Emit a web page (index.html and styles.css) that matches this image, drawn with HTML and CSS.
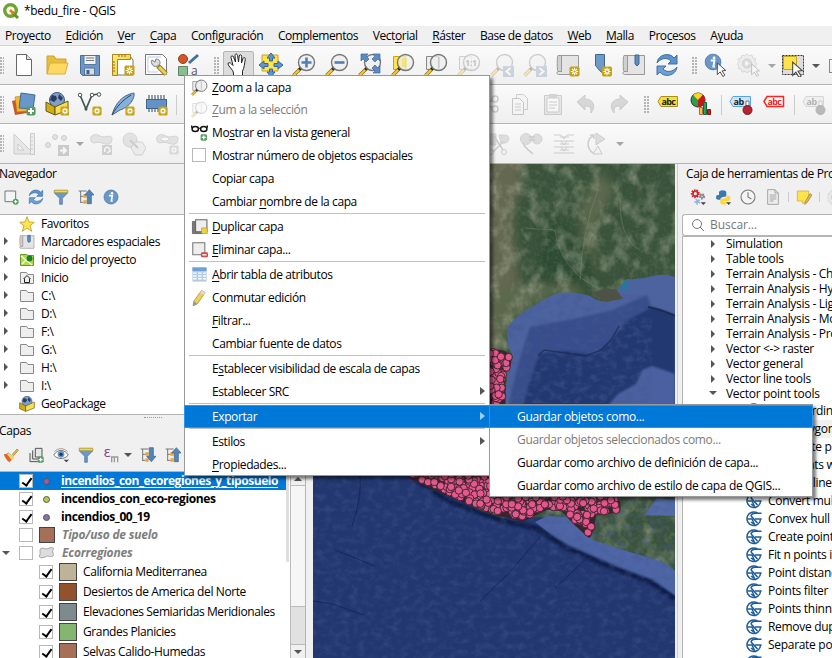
FILE: index.html
```html
<!DOCTYPE html>
<html lang="es">
<head>
<meta charset="utf-8">
<title>*bedu_fire - QGIS</title>
<link rel="stylesheet" href="styles.css">
</head>
<body>
<svg class="defs" width="0" height="0">
<defs>
<linearGradient id="gy" x1="0" y1="0" x2="1" y2="1"><stop offset="0" stop-color="#ffef80"/><stop offset="1" stop-color="#e8c52a"/></linearGradient>
<symbol id="star" viewBox="0 0 12 12"><rect x=".5" y=".5" width="11" height="11" rx="2" fill="#c8a216"/><path d="M6 2v8M2 6h8M3.3 3.3l5.4 5.4M8.7 3.3L3.3 8.7" stroke="#fff" stroke-width="1.3"/><circle cx="6" cy="6" r="1.2" fill="#c8a216"/></symbol>
<symbol id="mag" viewBox="0 0 24 24"><path d="M9 15L1.500 22.500" stroke="#8c6d20" stroke-width="3.600"/><path d="M7 17l-5.500 5.500" stroke="#f5c83a" stroke-width="2.200"/><path d="M9.500 14.500l-2 2" stroke="#222" stroke-width="3"/><circle cx="14.500" cy="9.500" r="8" fill="#eee" fill-opacity=".75" stroke="#777" stroke-width="1.400"/></symbol>
<symbol id="new" viewBox="0 0 24 24"><path d="M4.500 1.500h10l5 5v16h-15z" fill="#fff" stroke="#666"/><path d="M14.500 1.500v5h5" fill="#ddd" stroke="#666"/></symbol>
<symbol id="open" viewBox="0 0 24 24"><path d="M2 21V3h7l2 3h10v4" fill="#e9bd3c" stroke="#cfa234"/><path d="M5 10h18l-3 11H2z" fill="#ffd964" stroke="#d9ac3c"/></symbol>
<symbol id="save" viewBox="0 0 24 24"><path d="M2.500 2.500h19v20h-17l-2-2z" fill="#6d97c8" stroke="#4a6e99"/><path d="M6 2.500h12v9H6z" fill="#f0f2f4" stroke="#55779b"/><path d="M8 5h8M8 7.500h8" stroke="#777"/><path d="M6.500 15h10v7h-10z" fill="#d9dde2" stroke="#55779b"/><path d="M8.500 17h3v4h-3z" fill="#3e628d"/></symbol>
<symbol id="layout" viewBox="0 0 24 24"><path d="M3 3h16l3 4v15H3z" fill="#fff" stroke="#777"/><path d="M1.500 1.500h18v5h-13v16h-5z" fill="url(#gy)" stroke="#a9851c"/><path d="M8 2v2M11 2v2M14 2v2M2 9h2M2 12h2M2 15h2M2 18h2" stroke="#8a6a10"/><use href="#star" x="13" y="12" width="11" height="11"/></symbol>
<symbol id="wrench" viewBox="0 0 24 24"><path d="M1.500 1.500h17l4 4v16h-21z" fill="#fff" stroke="#777"/><path d="M4 4h13M4 4v15h10" stroke="#b7cbea" fill="none"/><path d="M14 13l8 8" stroke="#967823" stroke-width="5"/><path d="M15 14l7 7" stroke="#f0cf55" stroke-width="3"/><path d="M8 7l3 2 1-3c4 0 5 4 3 6s-6 2-7-1c-1-2-1-3 0-4z" fill="#ddd" stroke="#777"/></symbol>
<symbol id="style" viewBox="0 0 24 24"><circle cx="6" cy="6" r="4.500" fill="#d4552a" stroke="#9a3c1c"/><path d="M12 10l9-8" stroke="#47719f" stroke-width="3"/><path d="M1.500 13.500h9v9h-9z" fill="#8bbc94" stroke="#58865f"/><text x="14" y="22" font-size="12" fill="#555">a</text></symbol>
<symbol id="hand" viewBox="0 0 24 24"><path d="M7.500 23v-3c0-3-5.500-7-5.500-9 0-1.800 2-1.800 3.500 0l1.500 1.500L5 4.500c-.3-2 2-2.200 2.600-.4L9.500 9 9 2.500c0-2 2.300-2 2.600 0L12.500 9l.7-6c.3-1.800 2.500-1.500 2.500.3l-.2 6.700 1.500-4.500c.6-1.600 2.600-1 2.300.7-1 5-.8 8-2.800 12v4.800z" fill="#fff" stroke="#222" stroke-width="1"/></symbol>
<symbol id="pansel" viewBox="0 0 24 24"><path d="M3 2h16v16H3z" fill="#ffe34c" stroke="#c5a424"/><path d="M12 0l4 5h-2.500v3h-3V5H8zM12 24l-4-5h2.500v-3h3v3H16zM0 12l5-4v2.500h4v3H5V16zM24 12l-5 4v-2.500h-4v-3h4V8z" fill="#6194cb" stroke="#34679f"/></symbol>
<symbol id="zin" viewBox="0 0 24 24"><use href="#mag"/><path d="M14.500 4.500v10M9.500 9.500h10" stroke="#4e7fb8" stroke-width="2.600"/></symbol>
<symbol id="zout" viewBox="0 0 24 24"><use href="#mag"/><path d="M9.500 9.500h10" stroke="#4e7fb8" stroke-width="2.600"/></symbol>
<symbol id="zfull" viewBox="0 0 24 24"><use href="#mag"/><path d="M3 1h7L8 3l3 3-3 3-3-3-2 2zM22 1v7l-2-2-3 3-3-3 3-3-2-2zM22 20h-7l2-2-3-3 3-3 3 3 2-2z" fill="#5c8dc2" stroke="#3e6898" stroke-width=".7"/></symbol>
<symbol id="zsel" viewBox="0 0 24 24"><path d="M2.500 3.500h12v13h-12z" fill="#ffe34c" stroke="#c5a424"/><use href="#mag"/><path d="M11 5h5v9h-5z" fill="#eedf6c" opacity=".7"/></symbol>
<symbol id="zlay" viewBox="0 0 24 24"><path d="M2.500 3.500h12v13h-12z" fill="#eee" stroke="#888"/><use href="#mag"/><path d="M15 4v11" stroke="#bbb"/></symbol>
<symbol id="z11" viewBox="0 0 24 24"><path d="M2.500 3.500h12v13h-12z" fill="#eee" stroke="#777"/><use href="#mag"/><text x="8" y="13" font-size="9" font-weight="700" fill="#555">1:1</text></symbol>
<symbol id="zlast" viewBox="0 0 24 24"><use href="#mag"/><path d="M13 13h11v11H13z" fill="#7790ad"/><path d="M20.500 15l-4 3.500 4 3.500" fill="none" stroke="#fff" stroke-width="2"/></symbol>
<symbol id="znext" viewBox="0 0 24 24"><use href="#mag"/><path d="M13 13h11v11H13z" fill="#7790ad"/><path d="M16.500 15l4 3.500-4 3.500" fill="none" stroke="#fff" stroke-width="2"/></symbol>
<symbol id="book" viewBox="0 0 24 24"><path d="M5.500 2.500h17v19h-20c-2 0-2-3 0-3h3z" fill="#e4e4e4" stroke="#999"/><path d="M2 2.500h3.500v16H2c-1 0-1-16 0-16z" fill="#d0d0d0" stroke="#999"/></symbol>
<symbol id="newmap" viewBox="0 0 24 24"><use href="#book"/><use href="#star" x="13" y="13" width="11" height="11"/></symbol>
<symbol id="newbm" viewBox="0 0 24 24"><path d="M6.500 1.500h9v20l-5-4-4-5z" fill="#6d9acb" stroke="#40688f"/><use href="#star" x="12.500" y="13" width="11" height="11"/></symbol>
<symbol id="bm" viewBox="0 0 24 24"><use href="#book"/><path d="M13 2v9l2 2 2-2V2z" fill="#5c8dc2" stroke="#40688f"/></symbol>
<symbol id="refresh" viewBox="0 0 24 24"><path d="M2 10C3 1 15-1 19 5l3-3v9h-9l3-3C12 4 6 5 2 10z" fill="#5b92cf" stroke="#42719f"/><path d="M22 14c-1 9-13 11-17 5l-3 3v-9h9l-3 3c4 4 10 3 14-2z" fill="#6ba0d8" stroke="#42719f"/></symbol>
<symbol id="cursor" viewBox="0 0 12 16"><path d="M1 1l9 8-4 .5 3 4.500-2 1.500-3-5-3 3z" fill="#fff" stroke="#444"/></symbol>
<symbol id="info" viewBox="0 0 24 24"><circle cx="12" cy="12" r="10.500" fill="#6a96c8" stroke="#41709f"/><circle cx="13.500" cy="6.500" r="1.900" fill="#fff"/><path d="M9 10h5l-1.500 8h2" stroke="#fff" stroke-width="2.500" fill="none"/></symbol>
<symbol id="ident" viewBox="0 0 24 24"><use href="#info" width="18" height="18"/><use href="#cursor" x="12" y="9" width="12" height="15"/></symbol>
<symbol id="gear" viewBox="0 0 24 24"><path d="M12 1l2.500 2.500 3.500-1 1 3.500 3.500 1-1 3.500L24 13l-2.500 2.500 1 3-3.500 1-1 3.500-3.500-1L12 24l-2.500-2-3.500 1-1-3.500-3.500-1 1-3L0 13l2.500-2.500-1-3.500L5 6l1-3.500 3.500 1z" fill="#ddd" stroke="#888"/><circle cx="12" cy="12.500" r="5.500" fill="#aaa" stroke="#777"/><path d="M10 9.500l5 3-5 3z" fill="#fff"/></symbol>
<symbol id="action" viewBox="0 0 24 24"><use href="#gear" width="20" height="20"/><use href="#cursor" x="13" y="10" width="12" height="14"/></symbol>
<symbol id="select" viewBox="0 0 24 24"><path d="M1.500 2.500h21v19h-21z" fill="#ddd" stroke="#333" stroke-dasharray="2 1"/><path d="M2.500 3.500h13v13h-13z" fill="#ffe34c" stroke="#c5a424"/><use href="#cursor" x="10" y="8" width="14" height="17"/></symbol>
<symbol id="plus" viewBox="0 0 12 12"><rect x=".5" y=".5" width="11" height="11" rx="2.500" fill="#5a9a66"/><path d="M6 2.500v7M2.500 6h7" stroke="#fff" stroke-width="2.200"/></symbol>
<symbol id="layers" viewBox="0 0 24 24"><path d="M0 9l13-3 2 15-12 2z" fill="#c9552d"/><path d="M3 5l13-2v16L5 20z" fill="#f4b82d" stroke="#b37f16" stroke-width=".6"/><path d="M9 1l14 2-2 14-14-1z" fill="#6a97c9" stroke="#416994"/><use href="#plus" x="14" y="14" width="10" height="10"/></symbol>
<symbol id="gpkg" viewBox="0 0 24 24"><circle cx="12" cy="8" r="7.500" fill="#7f9fc8" stroke="#3c5a82"/><path d="M7 3l4 1 1 3-3 3-4-2zM14 2l4 4-2 3-3-3z" fill="#273d60"/><path d="M1 10l9 5v8l-9-4z" fill="#d0ac18" stroke="#6b5608"/><path d="M10 15l13-6v9l-13 5z" fill="#f6e05a" stroke="#6b5608"/></symbol>
<symbol id="newgpkg" viewBox="0 0 24 24"><use href="#gpkg"/><use href="#star" x="15" y="14" width="10" height="10"/></symbol>
<symbol id="shp" viewBox="0 0 24 24"><path d="M2 3l6 14 6-14 7-1" fill="none" stroke="#455" stroke-width="1.700"/><circle cx="2" cy="3" r="1.800" fill="#fff" stroke="#455"/><circle cx="14" cy="3" r="1.800" fill="#fff" stroke="#455"/><circle cx="21" cy="2.500" r="1.800" fill="#fff" stroke="#455"/><circle cx="8" cy="17" r="1.500" fill="#455"/><use href="#star" x="14" y="14" width="10" height="10"/></symbol>
<symbol id="feather" viewBox="0 0 24 24"><path d="M1 23C4 12 11 3 23 1c1 5-4 14-14 17z" fill="#86b0da" stroke="#46698f"/><path d="M1 23C6 14 12 8 20 3" stroke="#345" fill="none"/><use href="#star" x="14" y="14" width="10" height="10"/></symbol>
<symbol id="chip" viewBox="0 0 24 24"><path d="M5 3v17M8 3v17M11 3v17M14 3v17M17 3v17M20 3v17" stroke="#345"/><rect x="2.500" y="7.500" width="20" height="9" fill="#6392c6" stroke="#3f668f"/><use href="#star" x="14" y="14" width="10" height="10"/></symbol>
<symbol id="cut" viewBox="0 0 24 24"><circle cx="20" cy="7" r="3" fill="none" stroke="#777" stroke-width="1.500"/><circle cx="20" cy="17" r="3" fill="none" stroke="#777" stroke-width="1.500"/><path d="M17 8L5 18M17 16L5 6" stroke="#777" stroke-width="2"/></symbol>
<symbol id="copy" viewBox="0 0 24 24"><path d="M8.500 2.500h7l4 4v11h-11z" fill="#eee" stroke="#777"/><path d="M4.500 6.500h7l4 4v12h-11z" fill="#f6f6f6" stroke="#666"/><path d="M7 12h6M7 15h6M7 18h6" stroke="#777"/></symbol>
<symbol id="paste" viewBox="0 0 24 24"><path d="M3.500 3.500h17v19h-17z" fill="#ccc" stroke="#777"/><path d="M6 6h12v14H6z" fill="#fff" stroke="#777"/><path d="M8 2h8v4H8z" fill="#888"/><path d="M8 10h8M8 13h8M8 16h6" stroke="#777"/></symbol>
<symbol id="undo" viewBox="0 0 24 24"><path d="M3 10l8-7v4c9 0 11 8 6 14 0-6-1-7-6-7v4z" fill="#999" stroke="#777"/></symbol>
<symbol id="redo" viewBox="0 0 24 24"><path d="M21 10l-8-7v4C4 7 2 15 7 21c0-6 1-7 6-7v4z" fill="#999" stroke="#777"/></symbol>
<symbol id="lab" viewBox="0 0 24 24"><path d="M2 9.500l3-5h16.500v10H5z" fill="#f7df38" stroke="#a7901c"/><text x="5.500" y="13" font-size="9" font-weight="700" fill="#222" textLength="14">abc</text></symbol>
<symbol id="labr" viewBox="0 0 24 24"><path d="M2 9.500l3-5h16.500v10H5z" fill="#fff" stroke="#f22" stroke-width="1.500"/><text x="5.500" y="13" font-size="9" font-weight="700" fill="#e22" textLength="14">abc</text></symbol>
<symbol id="labp" viewBox="0 0 24 24"><path d="M1 9.500l3-5h17.500v10H4z" fill="#cfe4fb" stroke="#58a0e8"/><text x="4.500" y="13" font-size="9" font-weight="700" fill="#222">ab</text><path d="M17 15V9h3v6" fill="#fff" stroke="#777"/><circle cx="18.500" cy="18" r="4.500" fill="#b52230" stroke="#7c1620"/></symbol>
<symbol id="diag" viewBox="0 0 24 24"><circle cx="9" cy="8" r="7" fill="#29a04a" stroke="#333"/><path d="M9 8L4 3a7 7 0 0110 0z" fill="#ffd21c"/><path d="M9 8l5-5a7 7 0 01-5 12z" fill="#c11a1a"/><path d="M10.500 15.500h3v7h-3z" fill="#ffc91c" stroke="#a66"/><path d="M14.500 10.500h3v12h-3z" fill="#2ba34c" stroke="#164"/><path d="M18.500 17.500h3v5h-3z" fill="#d22020" stroke="#811"/></symbol>
<symbol id="rule" viewBox="0 0 24 24"><path d="M2 2v20h20zM6 12v6h6z" fill="#ccc" stroke="#777" fill-rule="evenodd"/><path d="M18.500 1.500h4v21h-4z" fill="#ddd" stroke="#777"/><path d="M19 5h2M19 9h2M19 13h2M19 17h2" stroke="#777"/></symbol>
<symbol id="nodes" viewBox="0 0 24 24"><g fill="#bbb" stroke="#777"><circle cx="3" cy="13" r="2.500"/><circle cx="10" cy="5" r="2.500"/><circle cx="19" cy="6" r="2.500"/></g><path d="M13 13h11v11H13z" fill="#777"/><path d="M15 18.500h6m-3-3l3 3-3 3" stroke="#fff" stroke-width="2" fill="none"/></symbol>
<symbol id="blob" viewBox="0 0 24 24"><path d="M2 9C0 3 6 1 11 4s12-3 12 3-5 6-10 4-9 2-11-2z" fill="#bbb" stroke="#888"/></symbol>
<symbol id="rotf" viewBox="0 0 24 24"><use href="#blob"/><path d="M13 13h10v10H13z" fill="#888"/><path d="M16 20c-2-6 5-6 5-1l-3 2" stroke="#fff" stroke-width="1.500" fill="none"/></symbol>
<symbol id="simp" viewBox="0 0 24 24"><circle cx="8" cy="8" r="7" fill="#bbb" stroke="#888"/><path d="M9 16l4-6h7l4 6-4 7h-7z" fill="#ddd" stroke="#888"/><path d="M8 8l8 8" stroke="#777" stroke-width="2"/></symbol>
<symbol id="ring" viewBox="0 0 24 24"><use href="#blob"/><ellipse cx="10" cy="7" rx="4" ry="2" fill="#fff" stroke="#999"/><use href="#star" x="14" y="13" width="10" height="10"/></symbol>
<symbol id="split" viewBox="0 0 24 24"><path d="M1 2h9v11H5zM13 3h6c6 0 4 8 0 8h-4z" fill="#aaa" stroke="#888"/><path d="M8 4l9 14M17 10L7 20" stroke="#777" stroke-width="1.500"/><circle cx="5" cy="20" r="2.500" fill="none" stroke="#777"/><circle cx="18" cy="20" r="2.500" fill="none" stroke="#777"/></symbol>
<symbol id="merge" viewBox="0 0 24 24"><circle cx="7" cy="7" r="5.500" fill="#aaa" stroke="#888"/><circle cx="18" cy="7" r="5" fill="#aaa" stroke="#888"/><path d="M4 11c2 6 4 5 10 11M10 5h6M10 8h6" stroke="#777" fill="none" stroke-width="1.500"/></symbol>
<symbol id="mattr" viewBox="0 0 24 24"><path d="M2 3h7M15 3h7M2 9h20M2 15h20M2 21h20M8 5h9M8 12h9M8 18h9M9 3l3 4M15 3l-3 4M9 9l3 4M15 9l-3 4M9 15l3 4M15 15l-3 4" stroke="#777"/></symbol>
<symbol id="rots" viewBox="0 0 24 24"><path d="M8 21C1 16 2 7 8 4M5 3h4v4" fill="none" stroke="#777" stroke-width="1.500"/><path d="M11 1l9 6-9 6z" fill="#aaa" stroke="#777"/><path d="M8 22l5-8 4 8z" fill="#eee" stroke="#777"/></symbol>
<symbol id="addl" viewBox="0 0 24 24"><path d="M3 3h16v16H3z" fill="#f4f4f4" stroke="#777" stroke-width="1.500"/><circle cx="19" cy="19" r="4.500" fill="#5a9a66"/><path d="M19 16.500v5M16.500 19h5" stroke="#fff" stroke-width="1.500"/></symbol>
<symbol id="filter" viewBox="0 0 24 24"><path d="M2 2h20v4l-8 8v9h-4v-9L2 6z" fill="#6a98cb" stroke="#456b96"/><path d="M2 2h20v3H2z" fill="#ffe34c" stroke="#c5a424"/></symbol>
<symbol id="tree" viewBox="0 0 24 24"><path d="M1 3h12M4 3v18M4 11h4M4 20h4" stroke="#777" stroke-width="1.500"/><path d="M8 8h5v5H8zM8 17h5v5H8z" fill="#f3a32f"/></symbol>
<symbol id="collapse" viewBox="0 0 24 24"><use href="#tree"/><path d="M17 1l7 8h-4v13h-6V9h-4z" fill="#5385b9" stroke="#365e88"/></symbol>
<symbol id="expand" viewBox="0 0 24 24"><use href="#tree"/><path d="M17 22l7-8h-4V1h-6v13h-4z" fill="#5385b9" stroke="#365e88"/></symbol>
<symbol id="fav" viewBox="0 0 24 24"><path d="M12 1l3 8 8 .5-6.500 5L19 23l-7-5-7 5 2.500-8.500L1 9.500 9 9z" fill="#ffe64f" stroke="#caa52b" stroke-width="1.400"/></symbol>
<symbol id="folder" viewBox="0 0 16 16"><path d="M1.500 2.500h6l1.500 2h5.500v9h-13z" fill="#eee" stroke="#8a8a8a"/></symbol>
<symbol id="home" viewBox="0 0 16 16"><use href="#folder"/><path d="M4.500 9L8 5.500 11.500 9M5.500 8.500v4h5v-4" fill="none" stroke="#222"/></symbol>
<symbol id="projhome" viewBox="0 0 16 16"><path d="M1.500 2.500h6l1.500 1h5.500v10h-13z" fill="#b6d84b" stroke="#68912f"/><path d="M2 4l11 9M3 12l6-6" stroke="#efffd0" stroke-width="1.500"/><circle cx="10.500" cy="6.500" r="3" fill="#168221"/></symbol>
<symbol id="brush" viewBox="0 0 24 24"><path d="M14 11l7-8 2 2-7 8z" fill="#e9b951" stroke="#a67a25"/><path d="M8 8l8 7-2 3-9-7z" fill="#72a3d3"/><path d="M1 11l5-1 8 8-4 5c-4-2-7-7-9-12z" fill="#de6537"/><path d="M6 11l7 8 4-2-8-8z" fill="#ffd65a"/></symbol>
<symbol id="group" viewBox="0 0 24 24"><path d="M3 9v13h14M7 5v13h13M11 2h10v13H11z" fill="#ddd" fill-opacity=".6" stroke="#555" stroke-width="1.500"/><use href="#plus" x="14" y="14" width="10" height="10"/></symbol>
<symbol id="eye" viewBox="0 0 24 24"><path d="M1 12c6-9 16-9 22 0-6 7-16 7-22 0z" fill="#fff" stroke="#777" stroke-width="1.500"/><circle cx="12" cy="11" r="5" fill="#6395ca"/><circle cx="12" cy="11" r="2.500" fill="#203954"/><path d="M2 7c6-6 14-6 20 0" fill="none" stroke="#777"/><path d="M16 19h8l-4 4z" fill="#444"/></symbol>
<symbol id="eps" viewBox="0 0 24 24"><text x="1" y="15" font-size="22" fill="#774782">ε</text><path d="M13 23v-8h9v8M17 15v8" fill="none" stroke="#999" stroke-width="2"/></symbol>
<symbol id="cogs" viewBox="0 0 24 24"><g fill="none" stroke-dasharray="2.200 1.300"><circle cx="8" cy="7" r="5" stroke="#d22630" stroke-width="3.500"/><circle cx="18" cy="11" r="3.200" stroke="#888" stroke-width="3"/><circle cx="11" cy="19" r="3" stroke="#91b5e0" stroke-width="3"/></g><circle cx="8" cy="7" r="3.600" fill="none" stroke="#d22630" stroke-width="2.500"/><circle cx="18" cy="11" r="2.200" fill="none" stroke="#888" stroke-width="2"/><circle cx="11" cy="19" r="2.400" fill="#91b5e0"/><path d="M16 20h8l-4 4z" fill="#444"/></symbol>
<symbol id="py" viewBox="0 0 24 24"><path d="M6 9V5c0-4 11-4 11 0v5c0 3-9 0-9 6H5C0 16 1 9 4 9h8" fill="#3d79aa"/><path d="M18 10h2c4 0 4 8 0 8h-8v1h6v2c0 3-10 3-10 0v-5c0-3 10 0 10-6z" fill="#ffd43f"/><path d="M17 20h7l-3.500 4z" fill="#444"/></symbol>
<symbol id="clock" viewBox="0 0 24 24"><circle cx="12" cy="12" r="10.500" fill="#f4f4f4" stroke="#777" stroke-width="1.600"/><path d="M12 5v7l5 3" fill="none" stroke="#777" stroke-width="1.600"/></symbol>
<symbol id="doc" viewBox="0 0 24 24"><path d="M4 1h11l5 5v17H4zM15 1v5h5" fill="#eee" stroke="#999" stroke-width="1.300"/><path d="M7 9h10M7 12h10M7 15h10M7 18h6" stroke="#999" stroke-width="1.300"/></symbol>
<symbol id="edit" viewBox="0 0 24 24"><path d="M2 3h17v14l-4 1-5 4v-4H2z" fill="#ffe34c" stroke="#c5a424"/><path d="M21 7l3 2-8 12-3 2 1-4z" fill="#e8bc4a" stroke="#8b7544"/></symbol>
<symbol id="glasses" viewBox="0 0 24 24"><ellipse cx="6" cy="7" rx="4.500" ry="3.500" fill="none" stroke="#111" stroke-width="2"/><ellipse cx="18" cy="7" rx="4.500" ry="3.500" fill="none" stroke="#111" stroke-width="2"/><path d="M10 6h4M2 6L0 3h2M22 6l2-3h-2" fill="none" stroke="#111" stroke-width="1.500"/><use href="#plus" x="13" y="14" width="10" height="10"/></symbol>
<symbol id="dup" viewBox="0 0 24 24"><path d="M2 5h15v17H2z" fill="#777" stroke="#555"/><path d="M6.500 2.500h16v17h-16z" fill="#eee" stroke="#666" stroke-width="1.500"/><path d="M15 14h8v8h-8z" fill="#edd348" stroke="#b59a22"/></symbol>
<symbol id="del" viewBox="0 0 24 24"><path d="M2.500 2.500h17v17h-17z" fill="#eee" stroke="#777" stroke-width="1.500"/><rect x="14" y="16" width="10" height="7" rx="2" fill="#dc4545"/><path d="M16 19.500h6" stroke="#fff" stroke-width="2"/></symbol>
<symbol id="table" viewBox="0 0 24 24"><path d="M2 2h20v20H2z" fill="#b3cae3"/><path d="M2 2h20v5H2z" fill="#6fa0d4"/><path d="M3 10h5M10 10h5M17 10h4M3 14h5M10 14h5M17 14h4M3 18h5M10 18h5M17 18h4" stroke="#fff" stroke-width="2"/></symbol>
<symbol id="pencil" viewBox="0 0 24 24"><path d="M15 2l5 3L9 21l-6 3 1-7z" fill="#ead35a" stroke="#99853a"/><path d="M4 17l5 4-6 3z" fill="#999"/><path d="M15 2l5 3-2 3-5-3z" fill="#ddd"/></symbol>
<symbol id="saga" viewBox="0 0 16 16"><path d="M11.500 2A6.800 6.800 0 1 0 14.600 8" fill="none" stroke="#1d5c98" stroke-width="1.500"/><path d="M15.500 2.300H9.500C6 2.300 4.500 4 5.500 5.500l6 6.500" fill="none" stroke="#1d5c98" stroke-width="1.600"/><path d="M15.500 8H9M1.500 8H6l2.500 5.500L5 11" fill="none" stroke="#1d5c98" stroke-width="1.500"/></symbol>
</defs>
</svg>

<header class="title"><svg viewBox="0 0 16 16"><circle cx="7.500" cy="7.500" r="5.800" fill="none" stroke="#6ba52f" stroke-width="3.400"/><path d="M9 9l6 6" stroke="#5b9428" stroke-width="3"/><path d="M7 7l4 4" stroke="#ee7913" stroke-width="2.500"/></svg><span>*bedu_fire - QGIS</span></header>
<nav class="menubar"><span>Pro<u>y</u>ecto</span><span><u>E</u>dición</span><span><u>V</u>er</span><span><u>C</u>apa</span><span>Con<u>f</u>iguración</span><span>Co<u>m</u>plementos</span><span>Vect<u>o</u>rial</span><span><u>R</u>áster</span><span>Base de <u>d</u>atos</span><span><u>W</u>eb</span><span><u>M</u>alla</span><span>Pro<u>c</u>esos</span><span>A<u>y</u>uda</span></nav>
<div class="bar"><i class="grip first"></i><b><svg><use href="#new"/></svg></b><b><svg><use href="#open"/></svg></b><b><svg><use href="#save"/></svg></b><b><svg><use href="#layout"/></svg></b><b><svg><use href="#wrench"/></svg></b><b><svg><use href="#style"/></svg></b><i class="grip"></i><b class="pressed"><svg><use href="#hand"/></svg></b><b><svg><use href="#pansel"/></svg></b><b><svg><use href="#zin"/></svg></b><b><svg><use href="#zout"/></svg></b><b><svg><use href="#zfull"/></svg></b><b><svg><use href="#zsel"/></svg></b><b><svg><use href="#zlay"/></svg></b><b class="off"><svg><use href="#z11"/></svg></b><b class="off"><svg><use href="#zlast"/></svg></b><b class="off"><svg><use href="#znext"/></svg></b><b><svg><use href="#newmap"/></svg></b><b><svg><use href="#newbm"/></svg></b><b><svg><use href="#bm"/></svg></b><b><svg><use href="#refresh"/></svg></b><i class="grip"></i><b><svg><use href="#ident"/></svg></b><b class="off"><svg><use href="#action"/></svg></b><i class="drop off"></i><b><svg><use href="#select"/></svg></b><i class="drop"></i><b class="edge"></b></div>
<div class="bar"><i class="grip first"></i><b><svg><use href="#layers"/></svg></b><b><svg><use href="#newgpkg"/></svg></b><b><svg><use href="#shp"/></svg></b><b><svg><use href="#feather"/></svg></b><b><svg><use href="#chip"/></svg></b><i class="sep"></i><i class="gap2"></i><b class="off"><svg><use href="#cut"/></svg></b><b class="off"><svg><use href="#copy"/></svg></b><b class="off"><svg><use href="#paste"/></svg></b><b class="off"><svg><use href="#undo"/></svg></b><b class="off"><svg><use href="#redo"/></svg></b><i class="grip"></i><b class="n"><svg><use href="#lab"/></svg></b><b><svg><use href="#diag"/></svg></b><i class="sep"></i><b class="n"><svg><use href="#labp"/></svg></b><b><svg><use href="#labr"/></svg></b><i class="sep"></i><b class="off gray"><svg><use href="#labp"/></svg></b></div>
<div class="bar last"><i class="grip first"></i><b class="off"><svg><use href="#rule"/></svg></b><b class="off"><svg><use href="#nodes"/></svg></b><i class="drop off"></i><b class="off gray"><svg><use href="#rotf"/></svg></b><b class="off"><svg><use href="#simp"/></svg></b><b class="off gray"><svg><use href="#ring"/></svg></b><i class="gap3"></i><b class="off"><svg><use href="#split"/></svg></b><b class="off"><svg><use href="#merge"/></svg></b><b class="off"><svg><use href="#mattr"/></svg></b><b class="off"><svg><use href="#rots"/></svg></b><i class="drop off"></i></div>

<main>
<aside class="left">
<h2>Navegador</h2>
<div class="tools"><svg><use href="#addl"/></svg><svg><use href="#refresh"/></svg><svg><use href="#filter"/></svg><svg><use href="#collapse"/></svg><svg><use href="#info"/></svg></div>
<ul class="browser">
<li class="leaf"><svg><use href="#fav"/></svg>Favoritos</li><li><svg><use href="#bm"/></svg>Marcadores espaciales</li><li><svg><use href="#projhome"/></svg>Inicio del proyecto</li><li><svg><use href="#home"/></svg>Inicio</li><li><svg><use href="#folder"/></svg>C:\</li><li><svg><use href="#folder"/></svg>D:\</li><li><svg><use href="#folder"/></svg>F:\</li><li><svg><use href="#folder"/></svg>G:\</li><li><svg><use href="#folder"/></svg>H:\</li><li><svg><use href="#folder"/></svg>I:\</li><li class="leaf"><svg><use href="#gpkg"/></svg>GeoPackage</li>
</ul>
<div class="splitter"><i></i></div>
<h2 class="capas">Capas</h2>
<div class="tools t2"><svg><use href="#brush"/></svg><svg><use href="#group"/></svg><svg><use href="#eye"/></svg><svg><use href="#filter"/></svg><svg><use href="#eps"/></svg><i class="drop"></i><svg><use href="#expand"/></svg><svg><use href="#collapse"/></svg></div>
<div class="layerbox">
<ul class="layers">
<li class="sel"><i class="chk on"></i><i class="pt p1"></i><span>incendios_con_ecoregiones_y_tiposuelo</span></li>
<li><i class="chk on"></i><i class="pt p2"></i><span>incendios_con_eco-regiones</span></li>
<li><i class="chk on"></i><i class="pt p3"></i><span>incendios_00_19</span></li>
<li class="it"><i class="chk"></i><i class="sw c5"></i><span>Tipo/uso de suelo</span></li>
<li class="it open"><i class="chk"></i><svg viewBox="0 0 18 14"><path d="M2 2c4-2 4 2 8 0 5-2 7-1 6 1-2 3 1 5 0 7-3 3-5-1-8 1-5 2-9 2-7-2 1-3-1-5 1-7z" fill="#ddd" stroke="#999"/></svg><span>Ecorregiones</span></li>
<li class="cat"><i class="chk on"></i><i class="sw c1"></i>California Mediterranea</li>
<li class="cat"><i class="chk on"></i><i class="sw c2"></i>Desiertos de America del Norte</li>
<li class="cat"><i class="chk on"></i><i class="sw c3"></i>Elevaciones Semiaridas Meridionales</li>
<li class="cat"><i class="chk on"></i><i class="sw c4"></i>Grandes Planicies</li>
<li class="cat"><i class="chk on"></i><i class="sw c5"></i>Selvas Calido-Humedas</li>
</ul>
<div class="scroll"><i class="up"></i><i class="thumb"></i><i class="track"></i><i class="down"></i></div>
</div>
</aside>
<svg class="map" viewBox="313 164 362 494">
<defs>
<filter id="rough" x="0" y="0" width="100%" height="100%"><feTurbulence type="fractalNoise" baseFrequency=".07 .06" numOctaves="6" seed="21"/><feColorMatrix values="0 0 0 0 .46  0 0 0 0 .48  0 0 0 0 .35  2.600 0 0 0 -1.150"/></filter>
<filter id="dark" x="0" y="0" width="100%" height="100%"><feTurbulence type="fractalNoise" baseFrequency=".3" numOctaves="4" seed="3"/><feColorMatrix values="0 0 0 0 .08  0 0 0 0 .14  0 0 0 0 .1  2 0 0 0 -.85"/></filter>
<filter id="sea" x="0" y="0" width="100%" height="100%"><feTurbulence type="fractalNoise" baseFrequency=".12 .16" numOctaves="5" seed="12"/><feColorMatrix values="0 0 0 0 .06  0 0 0 0 .1  0 0 0 0 .27  2 0 0 0 -.85"/></filter>
<filter id="b1"><feGaussianBlur stdDeviation="1.200"/></filter><filter id="b4"><feGaussianBlur stdDeviation="5"/></filter>
<clipPath id="gulf"><path d="M509 348Q505 330 510 324 520 313 532 307 543 299 555 294 570 290 590 296 596 301 607 302 615 300 623 299L617 290 627 279Q640 280 653 276 664 273 675 277V420H500L505 405 507 377 513 357z"/></clipPath>
</defs>
<path d="M313 164h362v494H313z" fill="#395239"/>
<g filter="url(#b4)"><path d="M480 154h45l-12 66 8 90-36 60z" fill="#66684f"/><path d="M600 170l15 20-22 40 5 40-25 30-15-5 26-40-3-50z" fill="#5d694c"/><path d="M545 220q55 10 50 70l-60-10z" fill="#2f4c33"/><path d="M490 290l50-6 30 5-50 20-20 40z" fill="#5c694c"/></g>
<path d="M313 164h362v200H313zM500 470h175v120H500z" filter="url(#rough)" opacity=".5"/>
<path d="M313 164h362v200H313zM500 470h175v120H500z" filter="url(#dark)" opacity=".5"/>
<path d="M525 228q22 2 30 2 2 26 26 48l20 12M598 190q-16 40-18 90M620 200q0 40 20 50" fill="none" stroke="#879070" opacity=".4"/>
<path d="M592 293l14-5 11 2 7 10-18 3z" fill="#4d5344"/>
<g clip-path="url(#gulf)"><path d="M490 260h185v160H490z" fill="#4d63a0"/>
<path d="M530 327l43-8 40-9 34-15 4 12 24 8v120H505q2-40 25-108z" fill="#394d8b" filter="url(#b1)"/>
<path d="M540 354l25-3 30 4 15-13 17-21 25-14 23 8v110H520q3-30 20-71z" fill="#243870" filter="url(#b1)"/>
<path d="M606 408l12-14 18-10 6-14 10-4 12 4 11 4v50z" fill="#4c61a0" filter="url(#b1)"/>
<path d="M530 327l95-17 22-15 5 12-20 20-25 28-70-2-20 45-15 5z" filter="url(#sea)" opacity=".65"/>
<path d="M538 356l6-6 22 3 20 3 15-6 10-10 8-14" stroke="#1c2a58" fill="none" stroke-width="1.500" opacity=".7"/>
<path d="M648 307l12 3 16 6" stroke="#1d2b52" fill="none" stroke-width="2"/><path d="M621 279h6v11h-6zM628 278l25-4v2l-25 4z" fill="#2478a0"/></g>
<path d="M313 420h98l20 63 60 35 56-1 46 24 27 9 43 13 12 9v86H313z" fill="#22366f"/>
<path d="M535 522l12-6 22 1 24 23 27 9 43 13 12 9v25l-25-16-50-18-33-14z" fill="#4e65a6"/>
<path d="M408 474l40 27 56 20 32 7 30 19 50 22 35 13 24 17" fill="none" stroke="#0e1c46" stroke-width="5" filter="url(#b1)"/>
<path d="M645 515l12-17 18 2v16z" fill="#536ba6"/>
<path d="M313 476h96l40 25 85 25 80 42 61 25v65H313z" filter="url(#sea)" opacity=".5"/>
<path d="M540 537l-32 37-28 27M360 476q2 22-8 50M313 601l20 3 30 11M335 550l40 16M585 560l-30 28" stroke="#101d49" fill="none" opacity=".6"/>
<g id="fires" fill="#e5588d" stroke="#38242d"></g>
</svg>
<aside class="right">
<h2>Caja de herramientas de Procesos</h2>
<div class="tools"><svg><use href="#cogs"/></svg><svg><use href="#py"/></svg><svg><use href="#clock"/></svg><svg><use href="#doc"/></svg><i class="sep"></i><svg><use href="#edit"/></svg><i class="sep"></i><svg class="off"><use href="#gear"/></svg></div>
<div class="search"><svg viewBox="0 0 14 14"><circle cx="6" cy="6" r="4.500" fill="none" stroke="#777"/><path d="M9 9l4 4" stroke="#777"/></svg>Buscar…</div>
<div class="toolbox">
<ul class="groups"><li>Simulation</li><li>Table tools</li><li>Terrain Analysis - Channels</li><li>Terrain Analysis - Hydrology</li><li>Terrain Analysis - Lighting</li><li>Terrain Analysis - Morphometry</li><li>Terrain Analysis - Profiles</li><li>Vector &lt;-&gt; raster</li><li>Vector general</li><li>Vector line tools</li><li class="open">Vector point tools</li></ul>
<ul class="algs"><li><svg><use href="#saga"/></svg>Add coordinates to points</li><li class="alt"><svg><use href="#saga"/></svg>Add polygon attributes to points</li><li><svg><use href="#saga"/></svg>Aggregate point observations</li><li><svg><use href="#saga"/></svg>Clip points with polygons</li><li><svg><use href="#saga"/></svg>Convert line to points</li><li><svg><use href="#saga"/></svg>Convert multipoints to points</li><li><svg><use href="#saga"/></svg>Convex hull</li><li><svg><use href="#saga"/></svg>Create point grid</li><li><svg><use href="#saga"/></svg>Fit n points in shape</li><li><svg><use href="#saga"/></svg>Point distances</li><li><svg><use href="#saga"/></svg>Points filter</li><li><svg><use href="#saga"/></svg>Points thinning</li><li><svg><use href="#saga"/></svg>Remove duplicate points</li><li><svg><use href="#saga"/></svg>Separate points by direction</li><li><svg><use href="#saga"/></svg></li></ul>
</div>
</aside>
</main>

<ul class="menu context">
<li class="short"><svg><use href="#zlay"/></svg><span><u>Z</u>oom a la capa</span></li>
<li class="dis"><svg><use href="#zlay"/></svg><span><u>Z</u>um a la selección</span></li>
<li><svg><use href="#glasses"/></svg><span>Mo<u>s</u>trar en la vista general</span></li>
<li><i class="chk"></i><span>Mostrar número de objetos espaciales</span></li>
<li><span>Copiar capa</span></li>
<li><span>Cambiar <u>n</u>ombre de la capa</span></li>
<li class="line"></li>
<li><svg><use href="#dup"/></svg><span><u>D</u>uplicar capa</span></li>
<li><svg><use href="#del"/></svg><span><u>E</u>liminar capa...</span></li>
<li class="line"></li>
<li><svg><use href="#table"/></svg><span><u>A</u>brir tabla de atributos</span></li>
<li><svg><use href="#pencil"/></svg><span>Conmutar edición</span></li>
<li><span><u>F</u>iltrar...</span></li>
<li><span>Cambiar fuente de datos</span></li>
<li class="line"></li>
<li><span>E<u>s</u>tablecer visibilidad de escala de capas</span></li>
<li class="more"><span>Establecer SRC</span></li>
<li class="line"></li>
<li class="more hot"><span>Exportar</span></li>
<li class="line"></li>
<li class="more"><span>Estilos</span></li>
<li class="short"><span><u>P</u>ropiedades...</span></li>
</ul>
<ul class="menu sub">
<li class="hot"><span>Guardar objetos como...</span></li>
<li class="dis"><span>Guardar objetos seleccionados como...</span></li>
<li><span>Guardar como archivo de definición de capa...</span></li>
<li><span>Guardar como archivo de estilo de capa de QGIS...</span></li>
</ul>
<script src="script.js"></script>
</body>
</html>
```
FILE: styles.css
```css
* { box-sizing: border-box; }
body { margin: 0; width: 832px; height: 658px; overflow: hidden; position: relative; background: #f0f0f0; color: #000; font: 12px/18px "Open Sans", "Noto Sans", sans-serif; letter-spacing: -.39px; white-space: nowrap; display: flex; flex-direction: column; }
ul { list-style: none; margin: 0; padding: 0; }
h2 { margin: 0; font-size: 12px; font-weight: 400; line-height: 19px; }
u { text-underline-offset: 2px; text-decoration-thickness: 1px; text-decoration-skip-ink: none; }
.defs { position: absolute; }
.title { height: 26px; background: #fff; display: flex; align-items: center; padding: 0 0 5px 3px; gap: 5px; letter-spacing: -.35px; }
.title svg { width: 16px; height: 16px; }
.menubar { height: 20px; padding-left: 5px; display: flex; gap: 14.7px; border-bottom: 1px solid #d4d4d4; line-height: 19px; letter-spacing: -.44px; }
.bar { height: 39px; display: flex; align-items: center; border-bottom: 1px solid #b4b4b4; border-top: 1px solid #fff; background: linear-gradient(#fafafa, #efefef); overflow: hidden; flex: none; }
.bar > * { flex: none; }
.bar.last { height: 40px; }
.bar b { width: 33px; height: 38px; display: flex; align-items: center; justify-content: center; font-weight: 400; }
.bar b.n { width: 33px; }
.bar svg { width: 24px; height: 24px; margin: -1px 1px 0 -1px; }
.bar b.pressed { width: 31px; margin: 0 1px; height: 30px; background: #dcdcdc; border: 1px solid #b5b5b5; border-radius: 2px; }
.bar b.edge { width: 10px; height: 14px; border: 1px solid #888; margin-left: 8px; }
.off { opacity: .32; }
.gray { filter: grayscale(1); }
.grip { width: 16px; height: 18px; background: radial-gradient(circle at 1px 1px, #b5b5b5 .8px, transparent 1px) 8px 0 / 3px 3px; background-clip: content-box; padding-left: 8px; padding-right: 3px; }
.grip.first { width: 8px; padding-left: 0; padding-right: 4px; background-position: 0 0; }
.drop { width: 11px; display: flex; justify-content: center; }
.drop::after { content: ""; border: 4px solid transparent; border-top-color: #555; border-bottom: 0; }
.drop.off { opacity: .5; }
.sep { width: 7px; height: 20px; background: linear-gradient(#ccc, #ccc) center / 1px 100% no-repeat; }
.gap2 { width: 291px; }
.gap3 { width: 298px; }
main { flex: 1; min-height: 0; display: flex; }
.left { width: 313px; flex: none; display: flex; flex-direction: column; background: #f0f0f0; }
.left h2 { margin-left: -1px; }
.tools { height: 31px; display: flex; align-items: center; gap: 9px; padding: 0 0 3px 3px; }
.tools svg { width: 16px; height: 16px; flex: none; }
.browser { width: 306px; height: 201px; background: #fff; border: solid #b4b4b4; border-width: 1px 1px 1px 0; }
.browser li { height: 18px; padding-left: 19px; display: flex; align-items: center; gap: 6px; position: relative; }
.browser svg { width: 16px; height: 16px; }
.browser li:not(.leaf)::before { content: ""; position: absolute; left: 4px; top: 4px; border: 4px solid transparent; border-left-color: #555; border-right: 0; }
.splitter { height: 6px; display: flex; justify-content: center; align-items: flex-start; padding-top: 2px; }
.splitter i { width: 18px; margin-right: 8px; border-top: 1px dotted #999; }
h2.capas { line-height: 19px; height: 20px; }
.t2 { height: 30px; padding-bottom: 3px; }
.t2 .drop { margin: 0 -2px 0 -6px; }
.layerbox { flex: 1; min-height: 0; display: flex; width: 306px; background: #fff; border: solid #b4b4b4; border-width: 1px 1px 0 0; }
.layers { flex: 1; overflow: hidden; font-weight: 700; }
.layers li { height: 18px; display: flex; align-items: center; padding-left: 19px; border-right: 3px solid #dedede; margin-right: 1px; position: relative; }
.layers li span { margin-left: 7px; }
.layers svg { width: 16px; height: 14px; margin-left: 6px; }
.layers .sel { background: #0078d7; color: #fff; text-decoration: underline; text-underline-offset: 2px; letter-spacing: -.44px; }
.layers .it { font-style: italic; color: #7e7e7e; letter-spacing: -.2px; }
.layers .cat { height: 20px; padding-left: 39px; font-weight: 400; border-right: 0; }
.layers .open::before { content: ""; position: absolute; left: 2px; top: 7px; border: 4px solid transparent; border-top-color: #555; border-bottom: 0; }
.chk { width: 14px; height: 14px; flex: none; border: 1px solid #b8b8b8; background: #fff; position: relative; }
.chk.on::after { content: ""; position: absolute; left: 4px; top: 1px; width: 4px; height: 8px; border: solid #000; border-width: 0 2px 2px 0; transform: rotate(36deg); }
.pt { width: 7px; height: 7px; border-radius: 50%; border: 1px solid #555; margin: 0 7px 0 10px; flex: none; }
.pt + span { margin-left: 4px !important; }
.p1 { background: #a15a9c; } .p2 { background: #b5cf42; } .p3 { background: #8a6fb1; }
.sw { width: 16px; height: 16px; border: 1px solid #444; margin-left: 6px; flex: none; }
.cat .sw { width: 18px; height: 18px; margin-right: 6px; }
.c1 { background: #beb297; } .c2 { background: #91522d; } .c3 { background: #7d8b8f; } .c4 { background: #85b66f; } .c5 { background: #a57058; }
.scroll { width: 15px; display: flex; flex-direction: column; border-left: 1px solid #bbb; background: #f0f0f0; }
.scroll i { display: flex; justify-content: center; align-items: center; }
.up, .down { height: 13px; }
.up::after, .down::after { content: ""; border: 4px solid transparent; border-bottom-color: #555; border-top: 0; }
.down::after { transform: rotate(180deg); }
.thumb { height: 122px; background: #f6f6f6; border: solid #bbb; border-width: 1px 0; }
.track { flex: 1; background: #e1e1e1; border-bottom: 1px solid #bbb; }
.map { width: 362px; height: 494px; flex: none; }
.right { flex: 1; min-width: 0; margin-left: 2px; border-left: 1px solid #ccc; padding-left: 4px; overflow: hidden; }
.right h2 { padding-left: 4px; }
.right .tools { padding-left: 8px; }
.right .sep { margin: 0 -5px; flex: none; height: 10px; }
.search { height: 22px; border: 1px solid #b4b4b4; border-radius: 3px 0 0 3px; border-right: 0; background: #fff; color: #777; display: flex; align-items: center; padding-left: 8px; gap: 5px; letter-spacing: -.05px; }
.search svg { width: 14px; height: 14px; }
.toolbox { background: #fff; border: 1px solid #b4b4b4; border-right: 0; height: 430px; }
.groups { margin-top: -1px; margin-bottom: 1px; letter-spacing: -.3px; }
.groups li { height: 15px; line-height: 15px; padding-left: 43px; position: relative; }
.groups li::before { content: ""; position: absolute; left: 28px; top: 4px; border: 4px solid transparent; border-left-color: #555; border-right: 0; }
.groups .open::before { left: 26px; top: 5px; border: 4px solid transparent; border-top-color: #555; border-bottom: 0; }
.algs { letter-spacing: -.3px; }
.algs li { height: 18px; display: flex; align-items: center; padding-left: 63px; gap: 6px; }
.algs svg { width: 16px; height: 16px; flex: none; }
.alt { background: #f0f0f0; }
.menu { position: absolute; background: #fff; border: 1px solid #999; box-shadow: 3px 3px 3px rgba(0,0,0,.5); }
.context { left: 184px; top: 75px; width: 306px; }
.sub { left: 489px; top: 404px; width: 324px; height: 93px; letter-spacing: -.34px; }
.menu li { height: 23px; line-height: 23px; position: relative; padding-left: 27px; display: flex; align-items: center; }
.menu li.short { height: 22px; }
.menu li.line { height: 2px; margin: 0 4px; background: linear-gradient(#c0c0c0 1px, #fff 1px); }
.menu svg, .menu .chk { position: absolute; left: 6px; top: 3px; width: 17px; height: 17px; }
.menu .chk { left: 7px; top: 4px; width: 14px; height: 14px; }
.sub li { padding-left: 27px; }
.menu .dis { color: #7b7b7b; }
.dis svg { opacity: .35; }
.menu .hot { background: #0078d7; color: #fff; box-shadow: inset 0 0 0 1px #2c96ec; margin: 0 -1px; padding-left: 28px; }
.more::after { content: ""; position: absolute; right: 4px; top: 7px; border: 4px solid transparent; border-left: 5px solid #555; border-right: 0; }
.hot.more::after { border-left-color: #9cd0f8; right: 5px; }
```
FILE: script.js
```js
// Scatter fire markers inside the affected areas.
const areas = [
  [[489,351],[503,353],[509,357],[508,366],[503,372],[503,405],[489,405]],
  [[408,470],[412,477],[447,493],[473,504],[497,513],[523,519],[547,507],[563,509],[577,524],[589,535],[592,524],[594,513],[618,510],[618,503],[610,494],[497,470]]
];
let seed = 7;
const rnd = () => (seed = (seed * 16807) % 2147483647) / 2147483647;
function inside(x, y, p) {
  let hit = false;
  for (let i = 0, j = p.length - 1; i < p.length; j = i++) {
    const [a, b] = p[i], [c, d] = p[j];
    if ((b > y) !== (d > y) && x < (c - a) * (y - b) / (d - b) + a) hit = !hit;
  }
  return hit;
}
const g = document.getElementById('fires');
let out = areas.map(p => `<polygon points="${p.join(' ')}" fill="#38242d" stroke-width="5" stroke-linejoin="round"/>`).join('');
for (const p of areas)
  for (let i = 0; i < 2600; i++) {
    const x = 408 + rnd() * 215, y = 348 + rnd() * 195;
    if (inside(x, y, p)) out += `<circle cx="${x.toFixed(1)}" cy="${y.toFixed(1)}" r="3.7" stroke-width=".9"/>`;
  }
g.innerHTML = out;
```
